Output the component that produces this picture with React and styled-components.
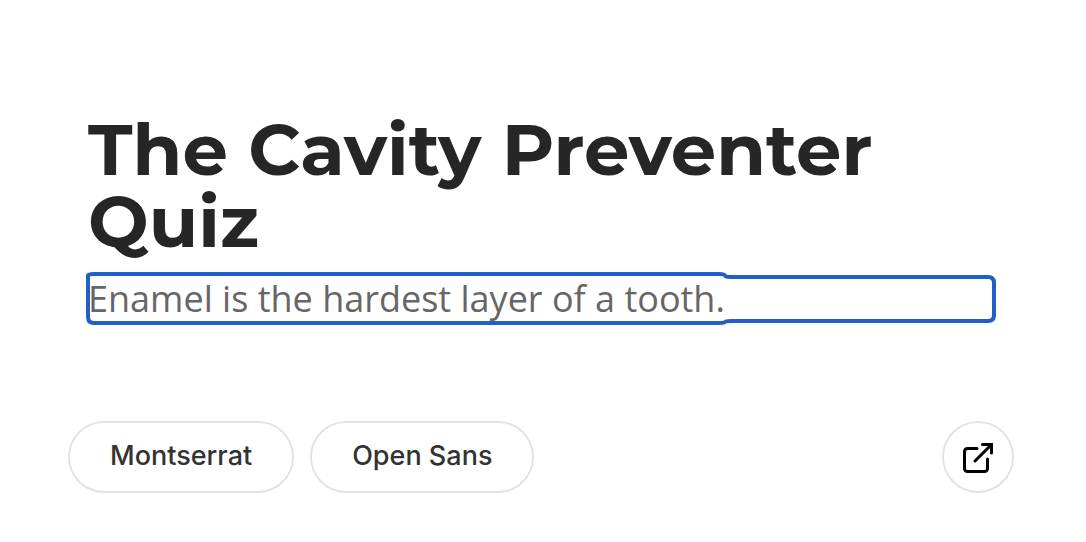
import React from "react";
import styled, { createGlobalStyle } from "styled-components";

const Global = createGlobalStyle`
  *, *::before, *::after { box-sizing: border-box; }
  body { margin: 0; background: #fff; font-family: Inter, "Liberation Sans", sans-serif; }
`;

const Page = styled.main`
  padding: 113px 72px 48px 68px;
`;

const Preview = styled.section`
  padding: 0 20px;
`;

const Title = styled.h1`
  margin: 0;
  color: #262626;
  font-family: Montserrat, Inter, sans-serif;
  font-size: 72px;
  font-weight: 700;
  line-height: 72px;
`;

const Answer = styled.p`
  zoom: 2;
  margin: 10px 0 0;
  color: #666;
  font-family: "Open Sans", sans-serif;
  font-size: 18px;
  line-height: 22px;
  outline: 2px auto #1f5fc8;
`;

const Bar = styled.footer`
  display: flex;
  align-items: center;
  gap: 16px;
  margin-top: 100px;
`;

const Pill = styled.button`
  height: 72px;
  padding: 0 40px 2px;
  border: 2px solid #e3e2ec;
  border-radius: 36px;
  background: #fff;
  color: #333;
  font: 500 27px/32px Inter, sans-serif;
`;

const Round = styled.a`
  display: grid;
  place-items: center;
  width: 72px;
  height: 72px;
  margin-left: auto;
  border: 2px solid #e3e2ec;
  border-radius: 50%;
  color: #000;
`;

const OpenIcon = () => (
  <svg width="32" height="32" viewBox="0 0 32 32" fill="none" stroke="currentColor" strokeWidth="3" strokeLinecap="round" strokeLinejoin="round" aria-hidden="true">
    <path d="M15 7.5H5.5a3 3 0 0 0-3 3v17a3 3 0 0 0 3 3h17a3 3 0 0 0 3-3V18" />
    <path d="M13 20 29.5 3.5" />
    <path d="M20.5 3.5h9V12" strokeLinejoin="miter" />
  </svg>
);

export default function App() {
  return (
    <Page>
      <Global />
      <Preview>
        <Title>The Cavity Preventer Quiz</Title>
        <Answer tabIndex={0}>
          <span>Enamel is the hardest layer of a tooth.</span>
        </Answer>
      </Preview>
      <Bar>
        <Pill type="button">Montserrat</Pill>
        <Pill type="button">Open Sans</Pill>
        <Round href="#open" aria-label="Open in new window">
          <OpenIcon />
        </Round>
      </Bar>
    </Page>
  );
}
